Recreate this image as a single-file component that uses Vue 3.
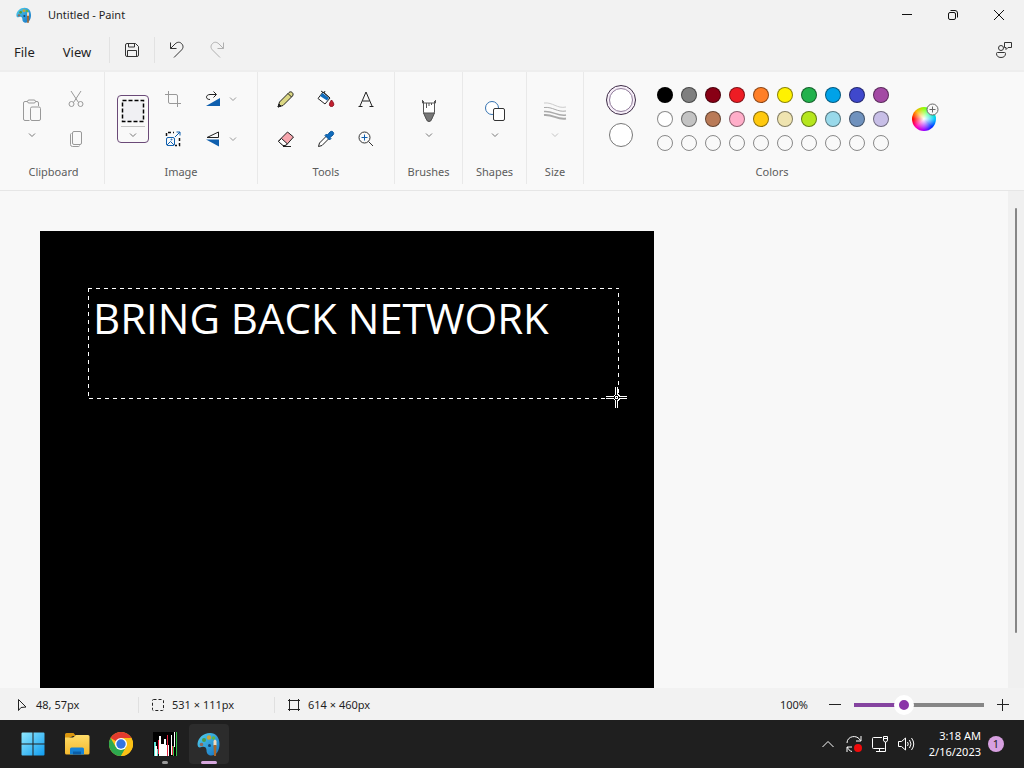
<script setup>
import { ref, computed } from 'vue'

// Palette rows, the last row holds the empty custom slots
const palette = [
  ['#000000', '#7f7f7f', '#880015', '#ed1c24', '#ff7f27', '#fff200', '#22b14c', '#00a2e8', '#3f48cc', '#a349a4'],
  ['#ffffff', '#c3c3c3', '#b97a57', '#ffaec9', '#ffc90e', '#efe4b0', '#b5e61d', '#99d9ea', '#7092be', '#c8bfe7'],
  Array(10).fill('')
]

const swatches = computed(() =>
  palette.flatMap((row, r) => row.map((color, c) => ({ id: r * 10 + c, color })))
)

const primary = ref('#ffffff')
const secondary = ref('#ffffff')

const pick = (swatch) => {
  if (swatch.color) primary.value = swatch.color
}

// Slider position, 36 of 100 stands for a zoom of 100%
const zoom = ref(36)

const zoomBy = (step) => {
  zoom.value = Math.min(100, Math.max(0, Number(zoom.value) + step))
}
</script>

<template>
  <div class="desktop">
    <svg class="defs" aria-hidden="true">
      <defs>
        <linearGradient id="palette-fill" x1="0" y1="0" x2="1" y2="1">
          <stop offset="0" stop-color="#4fd0ee" />
          <stop offset="1" stop-color="#1672c4" />
        </linearGradient>
        <linearGradient id="win-fill" x1="0" y1="0" x2="1" y2="1">
          <stop offset="0" stop-color="#8fe8fd" />
          <stop offset="1" stop-color="#0f9cf0" />
        </linearGradient>
        <linearGradient id="folder-fill" x1="0" y1="0" x2="0" y2="1">
          <stop offset="0" stop-color="#ffdc68" />
          <stop offset="1" stop-color="#f4b92e" />
        </linearGradient>
        <symbol id="chevron" viewBox="0 0 8 8">
          <path d="M1 2.500 4 5.500 7 2.500" fill="none" stroke="currentColor" />
        </symbol>
        <symbol id="paint" viewBox="0 0 24 24">
          <path d="M13 1C6 1 1 6 .5 12c0 3.500 2 4 4 3C7 14 9.500 15 9.500 18c0 4 2 5.500 5 5.500 5 0 8-5 8-11.500S19 1 13 1z" fill="url(#palette-fill)" />
          <circle cx="12" cy="5.500" r="2.200" fill="#c9a43a" />
          <circle cx="7" cy="8" r="2" fill="#4f9d43" />
          <circle cx="4.500" cy="12.500" r="1.800" fill="#8f6a5c" />
          <circle cx="16.500" cy="6" r="1.800" fill="#5fb74a" />
          <circle cx="12.500" cy="13.500" r="1.500" fill="#17466f" />
          <path d="M16.500 9q1.500-3 3 0v4.500h-3z" fill="#f1d9bb" />
          <path d="M16.500 13h3l-.5 11h-2z" fill="#a8672b" />
        </symbol>
      </defs>
    </svg>

    <header class="titlebar">
      <svg class="app-icon" width="16" height="16"><use href="#paint" /></svg>
      <span class="app-title">Untitled - Paint</span>
      <div class="window-controls">
        <button aria-label="Minimize">
          <svg width="12" height="12" viewBox="0 0 12 12"><path d="M1 5.500h10" stroke="#111" /></svg>
        </button>
        <button aria-label="Restore">
          <svg width="12" height="12" viewBox="0 0 12 12" fill="none" stroke="#111">
            <rect x="1.500" y="3.500" width="7" height="7" rx="1.500" />
            <path d="M3.500 1.500h4.500a2.500 2.500 0 0 1 2.500 2.500v4.500" />
          </svg>
        </button>
        <button aria-label="Close">
          <svg width="12" height="12" viewBox="0 0 12 12"><path d="M1 1l10 10M11 1 1 11" stroke="#111" /></svg>
        </button>
      </div>
    </header>

    <nav class="menubar">
      <button class="menu">File</button>
      <button class="menu">View</button>
      <i class="rule"></i>
      <button class="quick" aria-label="Save">
        <svg width="16" height="16" viewBox="0 0 16 16" fill="none" stroke="#333">
          <path d="M1.500 3a1.500 1.500 0 0 1 1.500-1.500h8.500l3 3V13a1.500 1.500 0 0 1-1.500 1.500H3A1.500 1.500 0 0 1 1.500 13z" />
          <path d="M4.500 1.500v3.500h6V1.500M3.500 14.500V8.500h9v6" />
        </svg>
      </button>
      <i class="rule"></i>
      <button class="quick" aria-label="Undo">
        <svg width="16" height="18" viewBox="0 0 16 18" fill="none" stroke="#333">
          <path d="M1.500 1.500v6h6M1.500 7.500 6 3c2.500-2.500 5-2 6.500-.5 2 2 2 4.500 0 6.500L5 16.500" />
        </svg>
      </button>
      <button class="quick" aria-label="Redo" disabled>
        <svg width="16" height="18" viewBox="0 0 16 18" fill="none" stroke="#b0b0b0">
          <path d="M14.500 1.500v6h-6M14.500 7.500 10 3C7.500.5 5 1 3.500 2.500c-2 2-2 4.500 0 6.500l7.500 7.500" />
        </svg>
      </button>
      <button class="quick feedback" aria-label="Feedback">
        <svg width="18" height="18" viewBox="0 0 18 18" fill="none" stroke="#333">
          <circle cx="6" cy="7" r="2.500" />
          <path d="M2.500 11.500h7a1 1 0 0 1 1 1c0 2.500-1.500 4-4.500 4s-4.500-1.500-4.500-4a1 1 0 0 1 1-1z" />
          <path d="M9.500 1.500h7v5H13l-2 2v-2H9.500z" />
        </svg>
      </button>
    </nav>

    <section class="ribbon">
      <div class="group clipboard">
        <div class="group-body">
          <button class="big" aria-label="Paste">
            <svg width="20" height="24" viewBox="0 0 20 24" fill="none" stroke="#999">
              <path d="M5.500 2.500H3A1.500 1.500 0 0 0 1.500 4v16A1.500 1.500 0 0 0 3 21.500h4.500M13.500 2.500H15A1.500 1.500 0 0 1 16.500 4v3" />
              <rect x="5.500" y="1" width="8" height="3" rx="1.500" />
              <rect x="8.500" y="8" width="10" height="13.500" rx="1.500" />
            </svg>
            <svg class="chev" width="8" height="8"><use href="#chevron" /></svg>
          </button>
          <div class="tools one">
            <button aria-label="Cut">
              <svg width="18" height="18" viewBox="0 0 18 18" fill="none" stroke="#999">
                <path d="M4 1l7.500 11.500M14 1 6.500 12.500" />
                <circle cx="4.500" cy="14" r="2.500" /><circle cx="13.500" cy="14" r="2.500" />
              </svg>
            </button>
            <button aria-label="Copy">
              <svg width="18" height="18" viewBox="0 0 18 18" fill="none" stroke="#999">
                <rect x="5.500" y="1.500" width="9" height="13" rx="1.500" />
                <path d="M4.500 3.500c-1 0-1 .5-1 1.500v9.500a2 2 0 0 0 2 2H11c1 0 1.500 0 1.500-1" />
              </svg>
            </button>
          </div>
        </div>
        <div class="group-label">Clipboard</div>
      </div>

      <div class="group image">
        <div class="group-body">
          <button class="big selected" aria-label="Select">
            <svg width="24" height="24" viewBox="0 0 24 24">
              <rect x="1.500" y="1.500" width="21" height="21" fill="#f0f0f3" stroke="#000" stroke-width="1.500" stroke-dasharray="4 2" />
            </svg>
            <svg class="chev" width="8" height="8"><use href="#chevron" /></svg>
          </button>
          <div class="tools one">
            <button aria-label="Crop">
              <svg width="16" height="16" viewBox="0 0 16 16" fill="none" stroke="#999">
                <path d="M0 3.500h11a1.500 1.500 0 0 1 1.500 1.500v11M3.500 0v11A1.500 1.500 0 0 0 5 12.500h11" />
              </svg>
            </button>
            <button aria-label="Resize">
              <svg width="16" height="16" viewBox="0 0 16 16" fill="none">
                <path d="M1.500 5V1.500H9M14.500 7v7.500H10" stroke="#111" stroke-width="1.500" stroke-dasharray="3 2" />
                <rect x="1.500" y="6.500" width="8" height="8" rx="1.500" stroke="#0f5fae" />
                <path d="M2 14l3.500-3.500L9 14M10 6l5-5M11.500 1H15v3.500" stroke="#0f5fae" />
                <circle cx="6.500" cy="8.500" r=".5" stroke="#0f5fae" />
              </svg>
            </button>
          </div>
          <div class="tools split">
            <button aria-label="Rotate">
              <svg width="16" height="16" viewBox="0 0 16 16" fill="none">
                <path d="M15 7v8H1z" fill="#0f5fae" />
                <path d="M5 8.500C2 8.500 1.500 7 1.500 6S2.500 3.500 5 3.500h6M8.500.5l3 3-3 3" stroke="#222" />
              </svg>
              <svg class="chev" width="8" height="8"><use href="#chevron" /></svg>
            </button>
            <button aria-label="Flip">
              <svg width="16" height="16" viewBox="0 0 16 16" fill="none">
                <path d="M13.500 1v5.500H2z" stroke="#222" />
                <path d="M14 8.500V15.500L1 8.500z" fill="#0f5fae" />
              </svg>
              <svg class="chev" width="8" height="8"><use href="#chevron" /></svg>
            </button>
          </div>
        </div>
        <div class="group-label">Image</div>
      </div>

      <div class="group toolbox">
        <div class="group-body">
          <div class="tools three">
            <button aria-label="Pencil">
              <svg width="18" height="18" viewBox="0 0 18 18" stroke="#222" stroke-linejoin="round">
                <path d="M1 17l1.500-5L12 2.500c2-2 5.500 1 3.500 3.500L6 15.500z" fill="#dcd884" />
                <path d="M11 3.500 14.500 7" fill="none" />
                <path d="M1 17l1-3 2 2z" fill="#222" />
              </svg>
            </button>
            <button aria-label="Fill">
              <svg width="18" height="18" viewBox="0 0 18 18" stroke="#222" stroke-linejoin="round">
                <path d="M6 2l7 6-5 6-7-5.500z" fill="#fff" />
                <path d="M5.500 3 12 8l-2 2.500L3 6z" fill="#0f6cbd" stroke="none" />
                <path d="M4 1l3 2 1-2M6 2l7 6" fill="none" />
                <path d="M14.500 10c3.500 4 2.500 6.500 0 6.500s-3-2.500 0-6.500z" fill="#c3202f" stroke="#8a1020" />
              </svg>
            </button>
            <button aria-label="Text">
              <svg width="18" height="18" viewBox="0 0 18 18" fill="none" stroke="#222">
                <path d="M3 16 9 2l6 14M5.500 11h7M1.500 16.500h4M12.500 16.500h4" />
              </svg>
            </button>
            <button aria-label="Eraser">
              <svg width="18" height="18" viewBox="0 0 18 18" stroke="#222" stroke-linejoin="round">
                <path d="M10.500 2 16.500 7 9 15.500H6L1.500 11z" fill="#f7a6ae" />
                <path d="M4.500 8.500 10 13.500 8.500 15.500H6L1.500 11.500z" fill="#fff" />
                <path d="M6 16.500h8" fill="none" />
              </svg>
            </button>
            <button aria-label="Color picker">
              <svg width="18" height="18" viewBox="0 0 18 18" stroke-linejoin="round">
                <path d="M9.500 6 12 8.500 5 15.500 1.500 16.500 2.500 13z" fill="#fff" stroke="#222" />
                <path d="M8 5.500 9.500 4l1 1L13 2c2-2 5 1 3 3l-3 2.500 1 1-1.500 1.500z" fill="#0f6cbd" stroke="#0b559a" />
              </svg>
            </button>
            <button aria-label="Magnifier">
              <svg width="18" height="18" viewBox="0 0 18 18" fill="none" stroke="#333">
                <circle cx="7.500" cy="7.500" r="5.500" /><path d="M11.500 11.500 16 16" />
                <path d="M7.500 4.500v6M4.500 7.500h6" stroke="#0f5fae" />
              </svg>
            </button>
          </div>
        </div>
        <div class="group-label">Tools</div>
      </div>

      <div class="group brushes">
        <div class="group-body">
          <button class="big" aria-label="Brushes">
            <svg width="16" height="24" viewBox="0 0 16 24" stroke="#555" fill="none">
              <path d="M2.500 2v11l3.500 8.500 2 1 2-1 3.500-8.500V2" fill="#fff" />
              <path d="M2.500 14h11l-3.500 7.500-2 1-2-1z" fill="#777" />
              <path d="M1.500 1v3h13V1M5.500 4v5M8 4v3M10.500 4v2" />
            </svg>
            <svg class="chev" width="8" height="8"><use href="#chevron" /></svg>
          </button>
        </div>
        <div class="group-label">Brushes</div>
      </div>

      <div class="group shapes">
        <div class="group-body">
          <button class="big" aria-label="Shapes">
            <svg width="22" height="24" viewBox="0 0 22 24" fill="#fff">
              <circle cx="8" cy="9" r="6.500" stroke="#3573b1" />
              <rect x="9.500" y="9.500" width="11" height="12" rx="1.500" stroke="#333" />
            </svg>
            <svg class="chev" width="8" height="8"><use href="#chevron" /></svg>
          </button>
        </div>
        <div class="group-label">Shapes</div>
      </div>

      <div class="group size">
        <div class="group-body">
          <button class="big faint" aria-label="Size">
            <svg width="24" height="24" viewBox="0 0 24 24" fill="none" stroke="#aaa">
              <path d="M1 4c9-1 13 6 22 4" stroke="#ccc" />
              <path d="M1 8.500c9-1 13 5 22 3.500" />
              <path d="M1 12.500c9-1 13 5 22 3.500" stroke-width="1.500" />
              <path d="M1 16c9-1 13 5 22 3.500" stroke-width="2" />
            </svg>
            <svg class="chev" width="8" height="8"><use href="#chevron" /></svg>
          </button>
        </div>
        <div class="group-label">Size</div>
      </div>

      <div class="group colors">
        <div class="group-body">
          <div class="current">
            <button class="color-one" aria-label="Color 1"><span :style="{ backgroundColor: primary }"></span></button>
            <button class="color-two" aria-label="Color 2" :style="{ backgroundColor: secondary }"></button>
          </div>
          <div class="palette">
            <button
              v-for="swatch in swatches"
              :key="swatch.id"
              class="swatch"
              aria-label="Palette color"
              @click="pick(swatch)"
            >
              <span :style="{ backgroundColor: swatch.color || 'transparent' }"></span>
            </button>
          </div>
          <button class="edit-colors" aria-label="Edit colors">
            <span class="wheel"></span>
            <svg class="wheel-plus" width="13" height="13" viewBox="0 0 13 13" fill="#f7f7f7" stroke="#666">
              <circle cx="6.500" cy="6.500" r="5.500" /><path d="M6.500 3.500v6M3.500 6.500h6" />
            </svg>
          </button>
        </div>
        <div class="group-label">Colors</div>
      </div>
    </section>

    <main class="workspace">
      <div class="stage">
        <div class="canvas">
          <div class="selection">
            <svg class="marquee">
              <rect x="0" y="0" width="100%" height="100%" fill="none" stroke="#fff" stroke-width="2" stroke-dasharray="4 4" />
            </svg>
            <span class="drawn-text">BRING BACK NETWORK</span>
            <svg class="crosshair" width="21" height="21" viewBox="0 0 21 21" shape-rendering="crispEdges">
              <path d="M9 0h3v7l2 2h7v3h-7l-2 2v7H9v-7l-2-2H0V9h7l2-2z" fill="#fff" />
              <path d="M10 0h1v8h-1zM10 13h1v8h-1zM0 10h8v1H0zM13 10h8v1h-8zM9 8h3v1H9zM9 12h3v1H9zM8 9h1v3H8zM12 9h1v3h-1zM10 10h1v1h-1z" fill="#000" />
            </svg>
          </div>
        </div>
      </div>
      <div class="scrollbar"><div class="scroll-thumb"></div></div>
    </main>

    <footer class="statusbar">
      <div class="status">
        <svg width="14" height="14" viewBox="0 0 14 14" fill="none" stroke="#222">
          <path d="M3.500 1.500v11L6 9.500l5-.5z" />
        </svg>
        <span>48, 57px</span>
      </div>
      <div class="status">
        <svg width="14" height="14" viewBox="0 0 14 14" fill="none" stroke="#222">
          <rect x="1.500" y="1.500" width="11" height="11" rx="1" stroke-dasharray="3 2" />
        </svg>
        <span>531 × 111px</span>
      </div>
      <div class="status">
        <svg width="14" height="14" viewBox="0 0 14 14" fill="none" stroke="#222">
          <path d="M2.500 1v12M11.500 1v12M1 2.500h12M1 11.500h12" />
        </svg>
        <span>614 × 460px</span>
      </div>
      <div class="zoom">
        <label for="zoom">100%</label>
        <button aria-label="Zoom out" @click="zoomBy(-10)">
          <svg width="12" height="12" viewBox="0 0 12 12"><path d="M0 5.500h12" stroke="#222" /></svg>
        </button>
        <input id="zoom" v-model="zoom" type="range" min="0" max="100" :style="{ '--fill': zoom + '%' }" />
        <button aria-label="Zoom in" @click="zoomBy(10)">
          <svg width="12" height="12" viewBox="0 0 12 12"><path d="M0 5.500h12M5.500 0v12" stroke="#222" /></svg>
        </button>
      </div>
    </footer>

    <div class="taskbar">
      <div class="pinned">
        <button aria-label="Start">
          <svg width="24" height="24" viewBox="0 0 24 24" fill="url(#win-fill)">
            <path d="M1.500.5H11.500V11.500H.5V1.500a1 1 0 0 1 1-1zM12.500.5h10a1 1 0 0 1 1 1v10h-11zM.5 12.500h11v11h-10a1 1 0 0 1-1-1zM12.500 12.500h11v10a1 1 0 0 1-1 1h-10z" />
          </svg>
        </button>
        <button aria-label="File Explorer">
          <svg width="26" height="24" viewBox="0 0 26 24">
            <path d="M1 2.500A1.500 1.500 0 0 1 2.500 1h7L12 4h-3L1 8z" fill="#d9950e" />
            <path d="M1 5.500h8L12 3h12a1.500 1.500 0 0 1 1.500 1.500V21a1.500 1.500 0 0 1-1.500 1.500H2.500A1.500 1.500 0 0 1 1 21z" fill="url(#folder-fill)" />
            <path d="M6 22.500V17a1.500 1.500 0 0 1 1.500-1.500h11A1.500 1.500 0 0 1 20 17v5.500z" fill="#1683d6" />
            <path d="M9 22.500v-3h8v3z" fill="#0b5ea8" />
          </svg>
        </button>
        <button aria-label="Chrome">
          <svg width="24" height="24" viewBox="0 0 24 24">
            <circle cx="12" cy="12" r="12" fill="#fbc116" />
            <path d="M12 12 1.600 6A12 12 0 0 1 22.400 6H12z" fill="#e33b2e" />
            <path d="M1.600 6A12 12 0 0 0 12 24l5.200-9L12 12 6.800 15z" fill="#2da94f" />
            <path d="M12 6H22.400A12 12 0 0 1 12 24l5.200-9z" fill="#fbc116" />
            <circle cx="12" cy="12" r="6" fill="#fff" />
            <circle cx="12" cy="12" r="4.700" fill="#3474e0" />
          </svg>
        </button>
        <button class="running" aria-label="Glitch">
          <svg width="24" height="24" viewBox="0 0 24 24" shape-rendering="crispEdges">
            <path d="M0 0h24v24H0z" fill="#000" />
            <path d="M1 10h2v14H1zM4 17h1v7H4z" fill="#5be0d0" />
            <path d="M2 14h2v10H2zM6 4h2v20H6zM8 12h3v12H8zM11 7h2v17h-2zM13 13h3v11h-3zM18 3h1v20h-1zM21 0h1v15h-1z" fill="#fff" />
            <path d="M5 8h1v14H5zM14 3h1v21h-1zM19 14h1v9h-1z" fill="#e5213d" />
            <path d="M23 0h1v24h-1zM20 14h1v10h-1z" fill="#36c44a" />
          </svg>
        </button>
        <button class="active" aria-label="Paint">
          <svg width="24" height="24"><use href="#paint" /></svg>
        </button>
      </div>

      <div class="tray">
        <button class="tray-icon" aria-label="Hidden icons">
          <svg width="12" height="8" viewBox="0 0 12 8" fill="none" stroke="#fff"><path d="M.5 7 6 1.500 11.500 7" /></svg>
        </button>
        <button class="tray-icon" aria-label="Updates">
          <svg width="18" height="18" viewBox="0 0 18 18" fill="none" stroke="#fff">
            <path d="M2 8C2 1 12-1 15.500 5.500M16 1v5h-5M7 16.500C4.500 16 3 14 2.500 12M2 17v-5h5" />
            <circle cx="13" cy="13" r="4" fill="#f00b0b" stroke="none" />
          </svg>
        </button>
        <button class="tray-icon" aria-label="Network">
          <svg width="18" height="18" viewBox="0 0 18 18" fill="none" stroke="#fff">
            <path d="M11 2.500H2.500a1 1 0 0 0-1 1v9a1 1 0 0 0 1 1h11M5 16.500h9.500V7M8.500 14v2" />
            <path d="M12.500 1.500h4V5a2 2 0 0 1-4 0zM12.500 3.500h4" />
          </svg>
        </button>
        <button class="tray-icon" aria-label="Volume">
          <svg width="18" height="18" viewBox="0 0 18 18" fill="none" stroke="#fff">
            <path d="M1.500 6.500h3l4-3.500v12l-4-3.500h-3zM10.500 7q1.500 2 0 4M12.500 5q3 4 0 8M14.500 3q4.500 6 0 12" />
          </svg>
        </button>
        <div class="clock">
          <span>3:18 AM</span>
          <span>2/16/2023</span>
        </div>
        <span class="badge">1</span>
      </div>
    </div>
  </div>
</template>

<style>
body {
  margin: 0;
}
</style>

<style scoped>
.desktop {
  display: flex;
  flex-direction: column;
  height: 100vh;
  overflow: hidden;
  background-color: #f2f2f2;
  color: #1f1f1f;
  font-family: "Noto Sans", "Open Sans", sans-serif;
  font-size: 11px;
  line-height: 16px;
}

.defs {
  position: absolute;
  width: 0;
  height: 0;
}

svg {
  display: block;
  flex: none;
}

button {
  display: flex;
  align-items: center;
  justify-content: center;
  padding: 0;
  border: none;
  background: none;
  color: inherit;
  font: inherit;
}

/* Title bar */
.titlebar {
  display: flex;
  align-items: center;
  height: 30px;
  padding-left: 16px;
}

.app-title {
  margin-left: 16px;
}

.window-controls {
  display: flex;
  margin-left: auto;
  padding-right: 2px;
}

.window-controls button {
  width: 46px;
  height: 30px;
}

/* Menu bar */
.menubar {
  display: flex;
  align-items: center;
  height: 40px;
  padding-left: 2px;
  border-bottom: 2px solid #eeeeee;
}

.menu {
  height: 32px;
  margin-right: 4px;
  padding: 4px 12px 0;
  font-size: 13px;
}

.rule {
  width: 1px;
  height: 26px;
  margin: 0 2px;
  background-color: #e2e2e2;
}

.quick {
  width: 40px;
  height: 32px;
}

.feedback {
  margin-left: auto;
}

/* Ribbon */
.ribbon {
  display: flex;
  padding-bottom: 6px;
  border-bottom: 1px solid #e6e6e6;
  background-color: #f9f9f9;
}

.group {
  flex: none;
  box-sizing: border-box;
  border-right: 1px solid #e9e9e9;
}

.group-body {
  display: flex;
  align-items: center;
  justify-content: center;
  gap: 8px;
  height: 82px;
  padding-top: 6px;
}

.group-label {
  color: #5c5c5c;
  line-height: 24px;
  text-align: center;
}

.clipboard {
  width: 105px;
  padding-left: 3px;
}

.clipboard .group-body {
  gap: 12px;
}

.image {
  width: 153px;
}

.toolbox {
  width: 137px;
}

.brushes {
  width: 68px;
}

.shapes {
  width: 64px;
}

.size {
  width: 57px;
}

.colors {
  width: 376px;
  border-right: none;
}

.big {
  flex-direction: column;
  box-sizing: border-box;
  width: 32px;
  height: 48px;
  gap: 8px;
  color: #777777;
}

.faint {
  color: #c4c4c4;
}

.selected {
  border: 1px solid #6b4a78;
  border-radius: 4px;
  background: linear-gradient(#c4c4c4, #c4c4c4) center 30px / 24px 1px no-repeat;
}

.chev {
  color: #999999;
}

.big .chev {
  color: inherit;
}

.tools {
  display: grid;
  grid-auto-rows: 32px;
  gap: 8px;
}

.one {
  grid-template-columns: 32px;
}

.three {
  grid-template-columns: repeat(3, 32px);
}

.split {
  grid-template-columns: 48px;
}

.split button {
  gap: 8px;
}

/* Colors */
.colors .group-body {
  gap: 16px;
}

.current {
  display: flex;
  flex-direction: column;
  align-items: center;
  gap: 8px;
  width: 32px;
  padding-bottom: 6px;
}

.color-one {
  box-sizing: border-box;
  width: 30px;
  height: 30px;
  border: 1px solid #3d2c46;
  border-radius: 50%;
  background-color: #f6eef8;
}

.color-one span {
  width: 22px;
  height: 22px;
  border: 1px solid #8f7a99;
  border-radius: 50%;
}

.color-two {
  box-sizing: border-box;
  width: 24px;
  height: 24px;
  border: 1px solid #777777;
  border-radius: 50%;
}

.palette {
  display: grid;
  grid-template-columns: repeat(10, 24px);
  grid-auto-rows: 24px;
}

.swatch span {
  box-sizing: border-box;
  width: 16px;
  height: 16px;
  border: 1px solid rgba(0, 0, 0, 0.45);
  border-radius: 50%;
}

.edit-colors {
  position: relative;
  width: 30px;
  height: 32px;
}

.wheel {
  width: 24px;
  height: 24px;
  border-radius: 50%;
  background:
    radial-gradient(circle, #ffffff 0%, rgba(255, 255, 255, 0) 65%),
    conic-gradient(#8cff00, #00ff90, #00c8ff, #0030ff, #a000ff, #ff00b0, #ff0000, #ffb000, #8cff00);
}

.wheel-plus {
  position: absolute;
  top: 0;
  right: 0;
}

/* Drawing area */
.workspace {
  display: flex;
  flex: 1;
  min-height: 0;
  background-color: #f8f8f8;
}

.stage {
  flex: 1;
  overflow: hidden;
  padding: 40px 40px 0;
}

.canvas {
  position: relative;
  width: 614px;
  height: 460px;
  background-color: #000000;
}

.selection {
  position: absolute;
  left: 48px;
  top: 57px;
  width: 531px;
  height: 111px;
}

.marquee {
  position: absolute;
  width: 100%;
  height: 100%;
}

.drawn-text {
  display: block;
  padding-left: 5px;
  color: #ffffff;
  font-family: "Open Sans", sans-serif;
  font-size: 42px;
  line-height: 60px;
  white-space: nowrap;
}

.crosshair {
  position: absolute;
  right: -8px;
  bottom: -9px;
}

.scrollbar {
  box-sizing: border-box;
  width: 16px;
  padding: 17px 7px 55px;
  background-color: #f0f0f0;
}

.scroll-thumb {
  height: 100%;
  border-radius: 1px;
  background-color: #868686;
}

/* Status bar */
.statusbar {
  display: flex;
  align-items: center;
  height: 30px;
  padding-top: 2px;
}

.status {
  display: flex;
  align-items: center;
  box-sizing: border-box;
  width: 136px;
  gap: 7px;
  padding-left: 12px;
  border-left: 1px solid #e0e0e0;
}

.status:first-child {
  width: 138px;
  padding-left: 15px;
  border-left: none;
}

.zoom {
  display: flex;
  align-items: center;
  gap: 3px;
  margin-left: auto;
  padding-right: 5px;
}

.zoom label {
  margin-right: 8px;
}

.zoom button {
  width: 32px;
  height: 24px;
}

.zoom input {
  width: 130px;
  height: 20px;
  margin: 0;
  appearance: none;
  background: linear-gradient(90deg, #8544a0 var(--fill), #868686 var(--fill)) center / 100% 4px no-repeat;
}

.zoom input::-webkit-slider-thumb {
  width: 20px;
  height: 20px;
  border: 5px solid #ffffff;
  border-radius: 50%;
  appearance: none;
  background-color: #8a35a8;
}

/* Taskbar */
.taskbar {
  display: flex;
  justify-content: space-between;
  height: 48px;
  background-color: #1f1f1f;
  color: #ffffff;
}

.pinned {
  display: flex;
  align-items: center;
  gap: 4px;
  padding-left: 13px;
}

.pinned button {
  position: relative;
  width: 40px;
  height: 40px;
  border-radius: 4px;
}

.pinned .active {
  background-color: #2c2c2c;
}

.running::after,
.active::after {
  position: absolute;
  bottom: 0;
  width: 6px;
  height: 3px;
  border-radius: 2px;
  background-color: #9a9a9a;
  content: "";
}

.active::after {
  width: 16px;
  background-color: #d7a8de;
}

.tray {
  display: flex;
  align-items: center;
  padding-right: 20px;
}

.tray-icon {
  width: 26px;
  height: 40px;
}

.clock {
  display: flex;
  flex-direction: column;
  align-items: flex-end;
  margin: 0 7px 0 10px;
}

.badge {
  width: 16px;
  border-radius: 50%;
  background-color: #d7a0e0;
  color: #222222;
  text-align: center;
}
</style>
